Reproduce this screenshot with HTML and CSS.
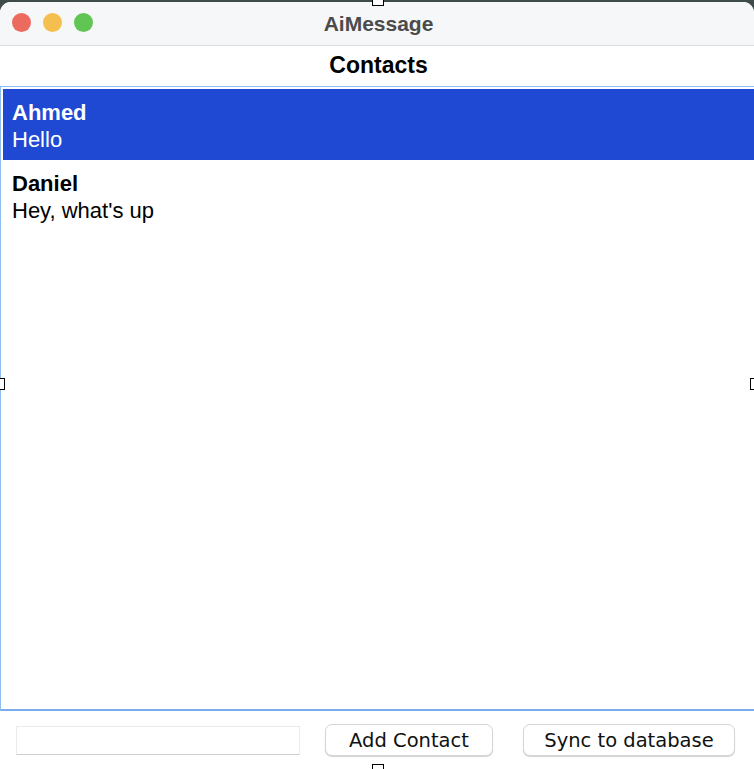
FILE: index.html
```html
<!DOCTYPE html>
<html>
<head>
<meta charset="utf-8">
<link rel="stylesheet" href="styles.css">
</head>
<body>
<div class="screen">
  <div class="window">
    <div class="titlebar">
      <div class="lights">
        <span class="light red"></span>
        <span class="light yellow"></span>
        <span class="light green"></span>
      </div>
      <div class="title">AiMessage</div>
    </div>
    <div class="content">
      <div class="heading">Contacts</div>
      <div class="list">
        <div class="row selected">
          <div class="name">Ahmed</div>
          <div class="msg">Hello</div>
        </div>
        <div class="row">
          <div class="name">Daniel</div>
          <div class="msg">Hey, what's up</div>
        </div>
      </div>
      <div class="footer">
        <div class="field"></div>
        <button class="btn btn-add">Add Contact</button>
        <button class="btn btn-sync">Sync to database</button>
      </div>
    </div>
  </div>
  <span class="handle h-top"></span>
  <span class="handle h-left"></span>
  <span class="handle h-right"></span>
  <span class="handle h-bottom"></span>
</div>
</body>
</html>
```
FILE: styles.css
```css
html, body {
  margin: 0;
  padding: 0;
}
body {
  width: 754px;
  height: 769px;
  overflow: hidden;
  font-family: "Liberation Sans", Arial, sans-serif;
}
.screen {
  position: relative;
  width: 754px;
  height: 769px;
  background: #3f4a4b;
}
.window {
  position: absolute;
  top: 2px;
  left: 0;
  right: 0;
  bottom: 0;
  background: #ffffff;
  border-radius: 11px 11px 0 0;
  display: flex;
  flex-direction: column;
  overflow: hidden;
}
.titlebar {
  height: 43px;
  flex: none;
  background: #f6f7f9;
  border-bottom: 1px solid #dcdcdc;
  position: relative;
  display: flex;
  align-items: center;
  justify-content: center;
}
.lights {
  position: absolute;
  left: 12px;
  top: 11px;
  display: flex;
  gap: 12px;
}
.light {
  width: 19px;
  height: 19px;
  border-radius: 50%;
  display: block;
}
.red { background: #ed6a5e; }
.yellow { background: #f5bf4f; }
.green { background: #61c554; }
.title {
  font-size: 21px;
  font-weight: bold;
  color: #4b4b4b;
  margin-left: 3px;
}
.content {
  flex: 1;
  display: flex;
  flex-direction: column;
}
.heading {
  height: 40px;
  flex: none;
  text-align: center;
  font-size: 23px;
  font-weight: bold;
  color: #000;
  line-height: 38px;
  margin-left: 3px;
}
.list {
  flex: 1;
  border-top: 1px solid #8fbdf0;
  border-left: 1px solid #8fbdf0;
  border-bottom: 2px solid #78aeea;
  padding: 2px 0 0 2px;
  box-shadow: inset 1px 1px 0 #ffffff;
}
.row {
  height: 71px;
  box-sizing: border-box;
  padding: 10px 10px 0 9px;
  font-size: 22px;
  line-height: 27px;
  color: #000;
}
.row.selected {
  background: #2049d3;
  color: #ffffff;
}
.name {
  font-weight: bold;
}
.footer {
  height: 58px;
  flex: none;
  display: flex;
  align-items: center;
  padding: 0 19px 0 16px;
  box-sizing: border-box;
}
.field {
  width: 284px;
  height: 29px;
  box-sizing: border-box;
  border: 1px solid #ebebeb;
  border-bottom: 1px solid #cfcfcf;
  background: #fff;
  margin-right: 25px;
}
.btn {
  height: 32px;
  box-sizing: border-box;
  border: 1px solid #d6d6d6;
  border-radius: 7px;
  background: #ffffff;
  box-shadow: 0 1px 1px rgba(0,0,0,0.18);
  font-family: "DejaVu Sans", sans-serif;
  font-size: 19.5px;
  color: #111111;
  padding: 0;
  display: flex;
  align-items: center;
  justify-content: center;
}
.btn-add {
  width: 168px;
  margin-right: 30px;
}
.btn-sync {
  width: 212px;
}
.handle {
  position: absolute;
  background: #fff;
  border: 1.5px solid #000;
  box-sizing: border-box;
  display: block;
}
.h-top {
  left: 372px;
  top: -4px;
  width: 12px;
  height: 10px;
}
.h-bottom {
  left: 372px;
  top: 764px;
  width: 12px;
  height: 10px;
}
.h-left {
  left: -6px;
  top: 378px;
  width: 11px;
  height: 12px;
}
.h-right {
  left: 750px;
  top: 378px;
  width: 11px;
  height: 12px;
}
```
